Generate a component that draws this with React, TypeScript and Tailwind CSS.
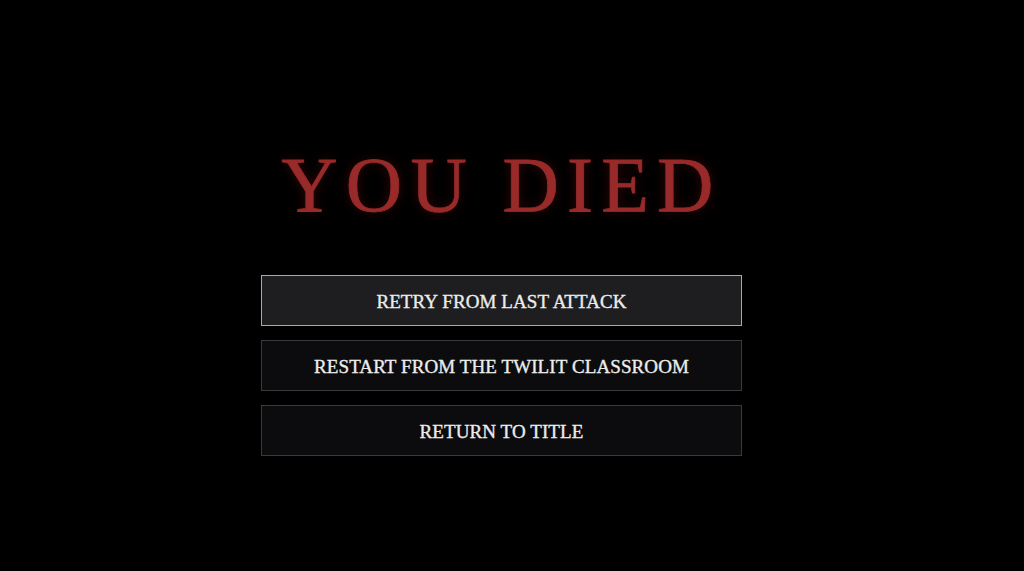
import React, { useState } from "react";

const OPTIONS = [
  "RETRY FROM LAST ATTACK",
  "RESTART FROM THE TWILIT CLASSROOM",
  "RETURN TO TITLE",
];

const App: React.FC = () => {
  const [selected, setSelected] = useState(0);

  return (
    <div
      className="min-h-screen w-full bg-black flex flex-col items-center pr-[21px] pt-[146px]"
      style={{ fontFamily: '"Liberation Serif", "Times New Roman", serif' }}
    >
      {/* Death banner */}
      <h1 className="text-[78px] leading-none tracking-[0.105em] text-[#982a2a] [-webkit-text-stroke:0.8px_#982a2a] [text-shadow:0_0_12px_rgba(150,20,20,0.4)]">
        YOU DIED
      </h1>

      {/* Menu */}
      <div className="mt-[51px] flex flex-col gap-[14px] w-[481px]">
        {OPTIONS.map((label, i) => (
          <button
            key={label}
            onMouseEnter={() => setSelected(i)}
            className={`h-[51px] w-full border pt-[4px] text-[19px] tracking-[0.005em] text-[#ececec] [-webkit-text-stroke:0.35px_#ececec] ${
              selected === i
                ? "bg-[#1e1e20] border-[#a9a9a9]"
                : "bg-[#0c0c0e] border-[#3a3a3c]"
            }`}
          >
            {label}
          </button>
        ))}
      </div>
    </div>
  );
};

export default App;
